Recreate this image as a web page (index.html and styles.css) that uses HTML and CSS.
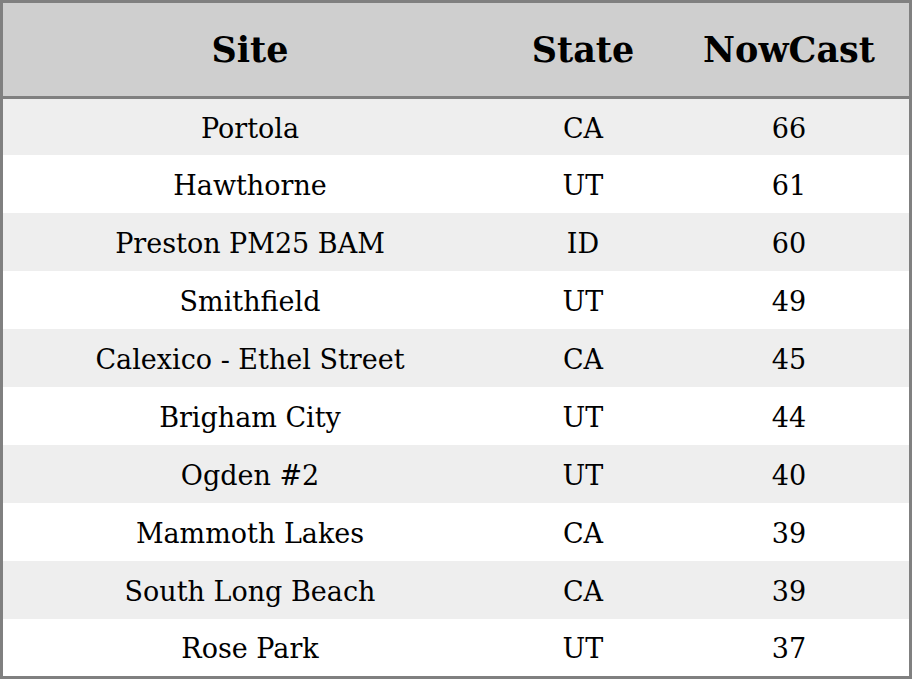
FILE: index.html
```html
<!DOCTYPE html>
<html>
<head>
<meta charset="utf-8">
<link rel="stylesheet" href="styles.css">
</head>
<body>
<table class="aq-table">
  <thead>
    <tr class="head-row"><th class="col-site">Site</th><th class="col-state">State</th><th class="col-now">NowCast</th></tr>
  </thead>
  <tbody>
    <tr class="row first"><td>Portola</td><td>CA</td><td>66</td></tr>
    <tr class="row"><td>Hawthorne</td><td>UT</td><td>61</td></tr>
    <tr class="row"><td>Preston PM25 BAM</td><td>ID</td><td>60</td></tr>
    <tr class="row"><td>Smithfield</td><td>UT</td><td>49</td></tr>
    <tr class="row"><td>Calexico - Ethel Street</td><td>CA</td><td>45</td></tr>
    <tr class="row"><td>Brigham City</td><td>UT</td><td>44</td></tr>
    <tr class="row"><td>Ogden #2</td><td>UT</td><td>40</td></tr>
    <tr class="row"><td>Mammoth Lakes</td><td>CA</td><td>39</td></tr>
    <tr class="row"><td>South Long Beach</td><td>CA</td><td>39</td></tr>
    <tr class="row last"><td>Rose Park</td><td>UT</td><td>37</td></tr>
  </tbody>
</table>
</body>
</html>
```
FILE: styles.css
```css
html, body {
  margin: 0;
  padding: 0;
  background: #ffffff;
}
.aq-table {
  width: 912px;
  border: 3px solid #808080;
  border-collapse: separate;
  border-spacing: 0;
  table-layout: fixed;
  font-family: "DejaVu Serif", serif;
  color: #000;
}
.aq-table th, .aq-table td {
  padding: 0;
  text-align: center;
  vertical-align: middle;
  line-height: 1;
  box-sizing: border-box;
}
.col-site { width: 494px; }
.col-state { width: 172px; }
.col-now { width: 240px; }
.head-row th {
  height: 96px;
  background: #cfcfcf;
  border-bottom: 3px solid #808080;
  font-size: 35px;
  font-weight: bold;
}
.row td {
  height: 58px;
  padding-top: 2px;
  font-size: 27px;
}
.row:nth-child(odd) td { background: #eeeeee; }
.row.first td { height: 56px; }
.row.last td { height: 57px; }
```
